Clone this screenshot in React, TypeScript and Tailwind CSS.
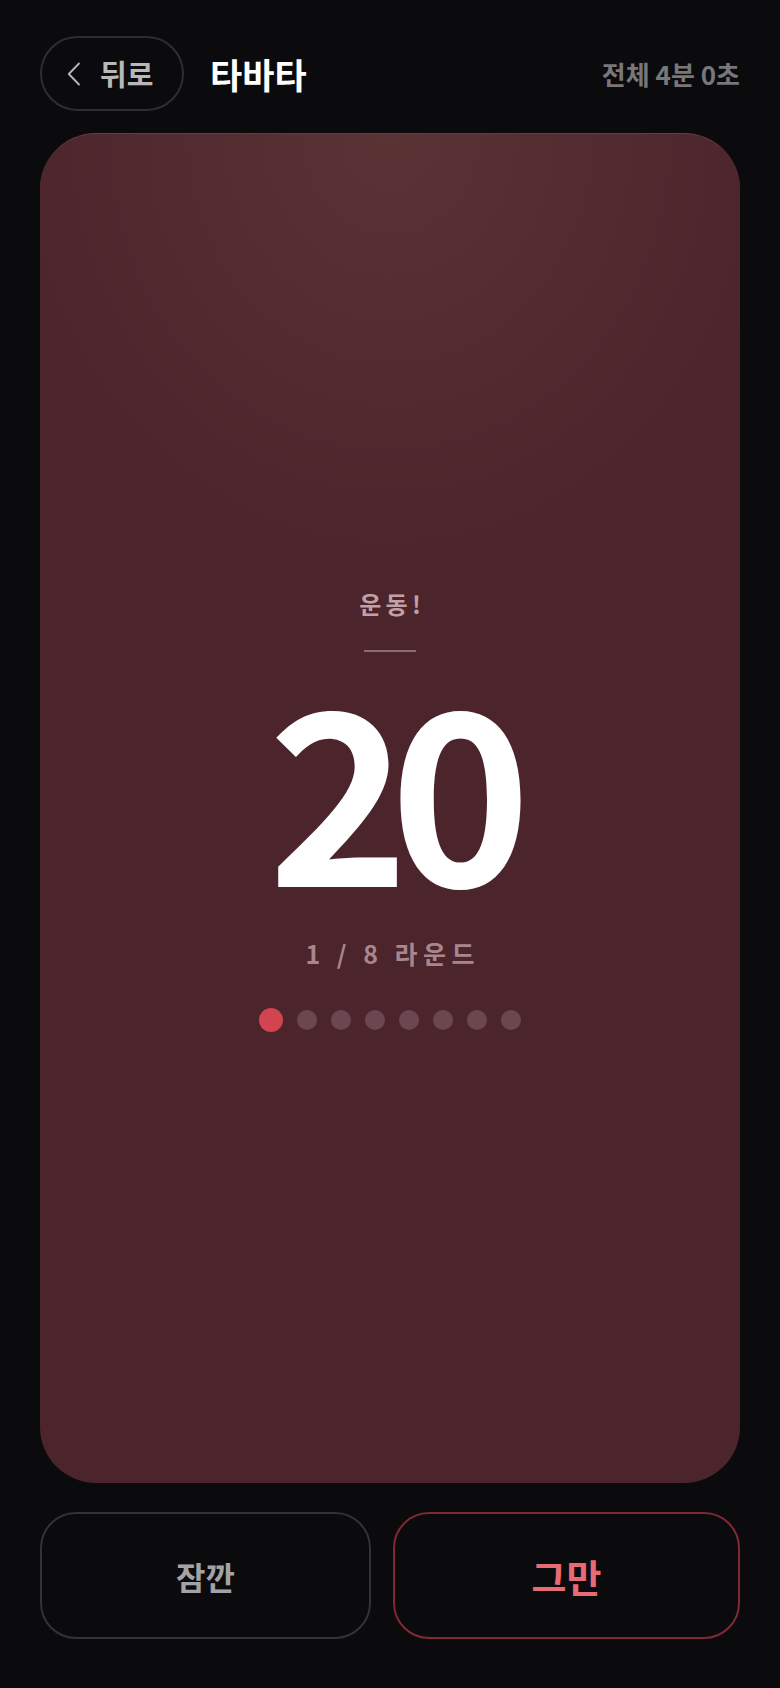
const ROUNDS = 8;
const current = 0;

const font = {
  fontFamily: '"Noto Sans CJK KR", "Noto Sans", sans-serif',
};

export default function App() {
  return (
    <div
      className="min-h-[1688px] w-full bg-[#0b0b0d] px-10 pt-[36px] pb-[50px] flex flex-col"
      style={font}
    >
      {/* header */}
      <div className="flex items-center h-[75px]">
        <button className="flex items-center h-[75px] w-[144px] rounded-full border-2 border-[#2e2e31] pl-[25px] gap-[19px] text-[#b8b8b8]">
          <svg width="14" height="24" viewBox="0 0 14 24" fill="none" className="shrink-0">
            <path d="M12 1.5 1.8 12 12 22.5" stroke="currentColor" strokeWidth="1.8" strokeLinecap="round" strokeLinejoin="round" />
          </svg>
          <span className="text-[29px] font-bold leading-none">뒤로</span>
        </button>
        <h1 className="ml-[26px] text-[35px] font-bold text-white leading-none">타바타</h1>
        <div className="ml-auto text-[26px] font-bold text-[#78787b] leading-none">
          전체 4분 0초
        </div>
      </div>

      {/* timer card */}
      <div className="relative mt-[22px] h-[1350px] rounded-[56px] bg-[#4b242c] border-t border-[#6a3c3f] overflow-hidden flex flex-col items-center justify-center">
        <div className="absolute inset-0 bg-[radial-gradient(ellipse_60%_35%_at_50%_0%,rgba(104,66,62,0.5),rgba(104,66,62,0)_100%)]" />
        <div className="relative flex flex-col items-center pt-[6px]">
          <div className="text-[24px] font-bold tracking-[0.18em] text-[#c3a0a6] leading-none pl-[0.18em]">
            운동!
          </div>
          <div className="mt-[34px] w-[52px] h-[2px] bg-[#8c6a6f]" />
          <div className="mt-[31px] h-[200px] text-[239px] font-bold text-white leading-[200px] tracking-[-0.08em]">
            20
          </div>
          <div className="mt-[58px] text-[25px] font-bold tracking-[0.22em] text-[#a9868c] leading-none pl-[0.22em]">
            1 / 8 라운드
          </div>
          <div className="mt-[42px] flex items-center gap-[14px]">
            {Array.from({ length: ROUNDS }).map((_, i) =>
              i === current ? (
                <span key={i} className="w-6 h-6 rounded-full bg-[#d2444f]" />
              ) : (
                <span key={i} className="w-5 h-5 rounded-full bg-[#6b4750]" />
              )
            )}
          </div>
        </div>
      </div>

      {/* controls */}
      <div className="mt-[29px] flex gap-[22px]">
        <button className="w-[331px] h-[127px] rounded-[36px] border-2 border-[#333336] text-[32px] font-bold text-[#a3a3a6]">
          잠깐
        </button>
        <button className="flex-1 h-[127px] rounded-[36px] border-2 border-[#7f2a33] text-[38px] font-bold text-[#e86a75]">
          그만
        </button>
      </div>
    </div>
  );
}
